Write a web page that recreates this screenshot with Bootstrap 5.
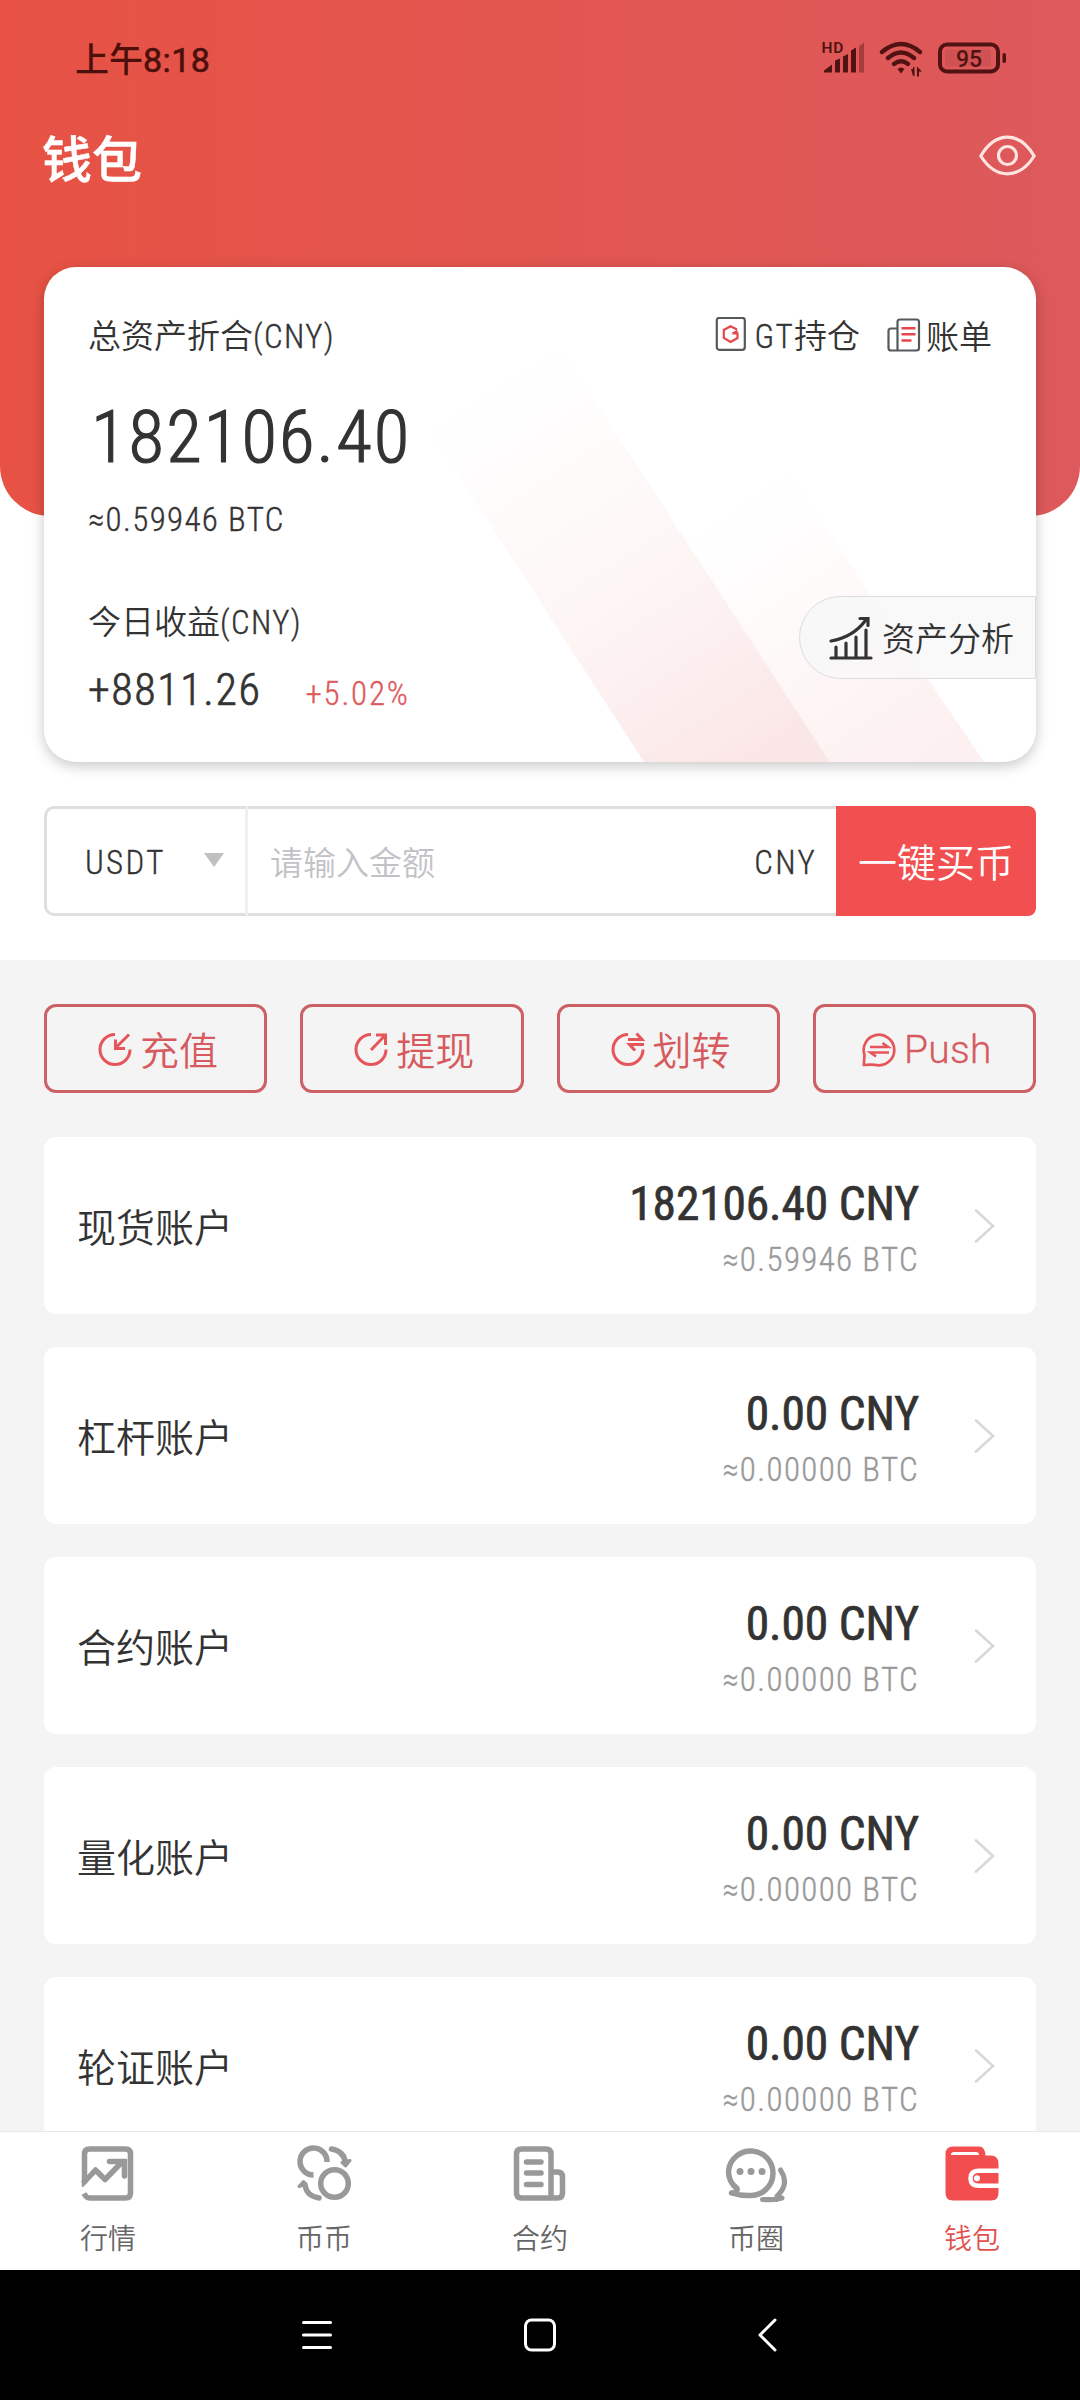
<!DOCTYPE html>
<html lang="zh-CN">
<head>
<meta charset="utf-8">
<meta name="viewport" content="width=device-width, initial-scale=1">
<title>钱包</title>
<link href="https://cdn.jsdelivr.net/npm/bootstrap@5.3.0/dist/css/bootstrap.min.css" rel="stylesheet">
<style>
  body { font-family: Roboto, "Noto Sans CJK SC", sans-serif; font-stretch: 87.5%; font-weight: 300; font-size: 33px; line-height: 1; color: #333; background: #fff; }
  svg { display: block; flex: none; }
  .screen { width: 1080px; height: 2400px; }
  .zh { font-family: "Noto Sans CJK SC", sans-serif; font-weight: 350; letter-spacing: 0; -webkit-text-stroke: 0; }
  .din { letter-spacing: 1.35px; -webkit-text-stroke: .35px currentColor; }
  .top-area { height: 960px; background: #fff; position: relative; }
  .hero { height: 516px; border-radius: 0 0 50px 50px; background: linear-gradient(90deg, #e75244, #e25650 50%, #dd595c); }
  .statusbar { height: 118px; padding: 0 74px 0 75px; color: #4b0f0c; }
  .clock { font-size: 34px; font-weight: 500; font-stretch: 100%; }
  .clock b { font-weight: 400; font-family: Roboto, sans-serif; letter-spacing: .4px; -webkit-text-stroke: .6px currentColor; }
  .titlebar { height: 76px; padding: 0 44px 0 42px; }
  .title-text { font-size: 50px; font-weight: 500; color: #fff; -webkit-text-stroke: .5px #fff; }
  .asset-card { position: absolute; left: 44px; right: 44px; top: 267px; height: 495px; border-radius: 32px; background: #fff; box-shadow: 0 4px 14px rgba(0,0,0,.22); overflow: hidden; padding: 48px 44px 0; }
  .rays { position: absolute; left: 0; top: 0; }
  .layer { position: relative; }
  .line-label { height: 40px; }
  .total { font-size: 73px; letter-spacing: 2.1px; -webkit-text-stroke: 1.2px currentColor; margin-top: 46px; height: 73px; padding-left: 3px; }
  .total-btc { margin-top: 29px; height: 33px; }
  .today { margin-top: 65px; height: 40px; }
  .profit { font-size: 44px; letter-spacing: 1.6px; -webkit-text-stroke: .7px currentColor; }
  .pct { color: #dd5a5c; letter-spacing: 1.8px; margin-left: 44px; }
  .profit-row { margin-top: 27px; height: 44px; }
  .analysis { position: absolute; right: 0; top: 329px; width: 237px; height: 83px; border: 1px solid #dcdcdc; border-radius: 42px 0 0 42px; background: rgba(248,248,248,.8); padding-left: 29px; gap: 9px; }
  .buy { position: absolute; left: 44px; right: 44px; top: 806px; height: 110px; }
  .coin { width: 204px; border: 3px solid #dfdfdf; border-right-color: #f0f0f0; border-radius: 10px 0 0 10px; padding: 2px 21px 0 38px; }
  .coin .din, .amount .din { letter-spacing: 2.3px; padding-top: 1px; }
  .arrow { margin-top: -5px; }
  .amount { border: solid #dfdfdf; border-width: 3px 0; padding: 1px 19px 0 22px; }
  .hint { color: #c2c2c6; }
  .buy-btn { width: 200px; background: #f25050; color: #fff; border-radius: 0 8px 8px 0; font-size: 39px; padding-bottom: 1px; }
  .list-area { background: #f4f4f4; padding: 44px 44px 0; min-height: 0; }
  .act { height: 89px; border: 3px solid #cd6065; border-radius: 12px; color: #d65a5e; font-size: 39px; gap: 8px; padding-left: 5px; }
  .acts { gap: 33px; margin-bottom: 44px; }
  .push { font-size: 39px; font-stretch: 100%; letter-spacing: .3px; -webkit-text-stroke: .3px currentColor; padding-top: 4px; }
  .acct { height: 177px; margin-bottom: 33px; border-radius: 12px; background: #fff; padding: 0 41px 0 33px; }
  .acct-name { font-size: 39px; }
  .figures { padding-top: 6px; }
  .cny { font-size: 47.5px; font-weight: 400; letter-spacing: -.15px; -webkit-text-stroke: .7px currentColor; }
  .acct-btc { color: #999; margin-top: 15px; }
  .chev { margin-left: 54px; }
  .tabs { height: 139px; border-top: 1px solid #e8e8e8; background: #fff; padding-top: 10px; }
  .tab-item { width: 216px; color: #666; font-size: 28px; gap: 19px; }
  .tab-item.on { color: #e2504f; }
  .sysbar { height: 130px; background: #000; padding-left: 302px; }
  .home-key { margin-left: 192px; margin-right: 201px; }
</style>
</head>
<body>
<div class="screen d-flex flex-column overflow-hidden">
  <div class="top-area flex-shrink-0">
    <div class="hero">
      <div class="statusbar d-flex align-items-center justify-content-between">
        <div class="clock zh">上午<b>8:18</b></div>
        <svg width="186" height="40" viewBox="820 42 186 40" fill="#511312">
          <text x="821.500" y="56" font-size="15.500" font-weight="600" font-family="Roboto, sans-serif" style="font-stretch:100%" letter-spacing=".8">HD</text>
          <path d="M824 75.500v-2l8-6v8zM835 75.500v-12l5-2v14zM843 75.500v-16l5-2.500v18.500zM851 75.500v-22l5-3v25z"/>
          <path opacity=".4" d="M859 75.500v-26l5-4v30z"/>
          <g fill="none" stroke="#511312" stroke-width="4.300" stroke-linecap="round"><path d="M882 55q19-16 38 0M888 61q13-11 26 0M894 67q7-5.500 14 0"/></g>
          <path d="M897.500 72q3.500-3 7 0l-3.500 4.500zM911 72h2v-2l1.500 0v9h-1.500zM917 79.500v-10l5 5h-3v5z"/>
          <rect x="940" y="47.500" width="58" height="27" rx="7" fill="none" stroke="#511312" stroke-width="4"/>
          <rect x="945" y="52.500" width="46" height="17" rx="3" opacity=".1"/>
          <rect x="1002.500" y="56" width="3.500" height="10" rx="1.700"/>
          <text x="956" y="69.500" font-size="23" font-weight="500" font-family="Roboto, sans-serif" style="font-stretch:100%">95</text>
        </svg>
      </div>
      <div class="titlebar d-flex align-items-center justify-content-between">
        <div class="title-text zh">钱包</div>
        <svg width="57" height="42" viewBox="0 0 57 42" fill="none" stroke="#ffe4e0" stroke-width="3.200"><path d="M1.800 21Q13 2.200 28.500 2.200T55.200 21Q44 38.800 28.500 38.800T1.800 21z" stroke-linejoin="round"/><circle cx="28.500" cy="20.500" r="9"/></svg>
      </div>
    </div>

    <div class="asset-card">
      <svg class="rays" width="992" height="495" viewBox="44 267 992 495">
        <defs>
          <linearGradient id="g1" gradientUnits="userSpaceOnUse" x1="500" y1="380" x2="750" y2="765"><stop offset="0" stop-color="#fbe4e5" stop-opacity="0"/><stop offset=".4" stop-color="#fceaea" stop-opacity=".3"/><stop offset="1" stop-color="#fbe6e7"/></linearGradient>
          <linearGradient id="g2" gradientUnits="userSpaceOnUse" x1="740" y1="500" x2="920" y2="765"><stop offset="0" stop-color="#fcecec" stop-opacity="0"/><stop offset=".45" stop-color="#fcecec" stop-opacity=".3"/><stop offset="1" stop-color="#fdf0f0"/></linearGradient>
        </defs>
        <path fill="url(#g1)" d="M374 345 530 302 830 762H644z"/>
        <path fill="url(#g2)" d="M650 495 760 430 984 762H830z"/>
      </svg>
      <div class="layer line-label d-flex align-items-center justify-content-between">
        <div class="din"><span class="zh">总资产折合</span>(CNY)</div>
        <div class="d-flex align-items-center">
          <svg width="32" height="36" viewBox="0 0 32 36" fill="none" stroke="#54595c" stroke-width="2.200"><rect x="1.800" y=".8" width="28" height="32" rx="2.500"/><path d="M22 12.500 15.500 9.300 8.800 13v8l6.700 4 7-4v-4.500h-5l5-2.500" stroke="#e5474a" stroke-width="2.200"/></svg>
          <span class="ms-2 din">GT<span class="zh">持仓</span></span>
          <svg class="ms-4" width="38" height="34" viewBox="-3 0 38 34" fill="none" stroke="#54595c" stroke-width="2.200"><path d="M10.500 32.500V4q0-2.500 2.500-2.500h16.500q2.500 0 2.500 2.500v26q0 2.500-2.500 2.500H4q-2.500 0-2.500-2.500V13q0-2.500 2.500-2.500h6.500"/><path d="M14.500 10.300h14M14.500 16.300h14M14.500 22.500h10" stroke="#e5474a" stroke-width="2.400"/></svg>
          <span class="zh ms-1">账单</span>
        </div>
      </div>
      <div class="layer total">182106.40</div>
      <div class="layer din total-btc">≈0.59946 BTC</div>
      <div class="layer today d-flex align-items-center"><div class="din"><span class="zh">今日收益</span>(CNY)</div></div>
      <div class="layer profit-row d-flex align-items-baseline"><span class="profit">+8811.26</span><span class="din pct">+5.02%</span></div>
      <div class="analysis d-flex align-items-center">
        <svg width="44" height="44" viewBox="0 0 44 44" fill="none" stroke="#333" stroke-width="3.200" stroke-linecap="round"><path d="M2 42h40M7 41V31M17 41V27M27 41V21M37 41V14M2 25Q24 21 36 5M31 2.500h8v7"/></svg>
        <span class="zh">资产分析</span>
      </div>
    </div>

    <div class="buy d-flex">
      <div class="coin d-flex align-items-center justify-content-between"><span class="din">USDT</span><svg class="arrow" width="20" height="14" viewBox="0 0 20 14"><path d="M0 0h20L10 14z" fill="#c0c0c0"/></svg></div>
      <div class="amount flex-grow-1 d-flex align-items-center justify-content-between"><span class="hint zh">请输入金额</span><span class="din">CNY</span></div>
      <div class="buy-btn zh d-flex align-items-center justify-content-center">一键买币</div>
    </div>
  </div>

  <div class="list-area flex-grow-1 overflow-hidden">
    <div class="acts d-flex">
      <div class="act col d-flex align-items-center justify-content-center"><svg width="34" height="36" viewBox="0 0 34 36" fill="none" stroke="#e5555a" stroke-width="3"><path d="M17 3.500A15 15 0 1 0 32 18.500M31 3.500 17.500 17M17.500 8.500V17.500H27"/></svg><span class="zh">充值</span></div>
      <div class="act col d-flex align-items-center justify-content-center"><svg width="34" height="36" viewBox="0 0 34 36" fill="none" stroke="#e5555a" stroke-width="3"><path d="M17 3.500A15 15 0 1 0 32 18.500M17 19 31 4.500M22 4H31.500V14"/></svg><span class="zh">提现</span></div>
      <div class="act col d-flex align-items-center justify-content-center"><svg width="34" height="36" viewBox="0 0 34 36" fill="none" stroke="#e5555a" stroke-width="3"><path d="M17 3.500A15 15 0 1 0 32 18.500M17 8.500H31L25.500 2.500M33 13.500H18.500L24 19.500"/></svg><span class="zh">划转</span></div>
      <div class="act col d-flex align-items-center justify-content-center"><svg width="34" height="36" viewBox="0 0 34 36" fill="none" stroke="#e5555a" stroke-width="2.700"><path d="M1.800 34 2.500 24A15.300 15.300 0 1 1 17 34.300Q10 33 1.800 34z" stroke-linejoin="round"/><path d="M8 16H26L20.500 12M27 21.500H8.500L14 25.500"/></svg><span class="push">Push</span></div>
    </div>

    <div class="acct d-flex align-items-center"><div class="acct-name zh me-auto">现货账户</div><div class="figures text-end"><div class="cny">182106.40 CNY</div><div class="din acct-btc">≈0.59946 BTC</div></div><svg class="chev" width="22" height="36" viewBox="0 0 22 36" fill="none" stroke="#d8d8d8" stroke-width="2.600" stroke-linecap="round"><path d="M3 2.500 20 18 3 33.500"/></svg></div>
    <div class="acct d-flex align-items-center"><div class="acct-name zh me-auto">杠杆账户</div><div class="figures text-end"><div class="cny">0.00 CNY</div><div class="din acct-btc">≈0.00000 BTC</div></div><svg class="chev" width="22" height="36" viewBox="0 0 22 36" fill="none" stroke="#d8d8d8" stroke-width="2.600" stroke-linecap="round"><path d="M3 2.500 20 18 3 33.500"/></svg></div>
    <div class="acct d-flex align-items-center"><div class="acct-name zh me-auto">合约账户</div><div class="figures text-end"><div class="cny">0.00 CNY</div><div class="din acct-btc">≈0.00000 BTC</div></div><svg class="chev" width="22" height="36" viewBox="0 0 22 36" fill="none" stroke="#d8d8d8" stroke-width="2.600" stroke-linecap="round"><path d="M3 2.500 20 18 3 33.500"/></svg></div>
    <div class="acct d-flex align-items-center"><div class="acct-name zh me-auto">量化账户</div><div class="figures text-end"><div class="cny">0.00 CNY</div><div class="din acct-btc">≈0.00000 BTC</div></div><svg class="chev" width="22" height="36" viewBox="0 0 22 36" fill="none" stroke="#d8d8d8" stroke-width="2.600" stroke-linecap="round"><path d="M3 2.500 20 18 3 33.500"/></svg></div>
    <div class="acct d-flex align-items-center"><div class="acct-name zh me-auto">轮证账户</div><div class="figures text-end"><div class="cny">0.00 CNY</div><div class="din acct-btc">≈0.00000 BTC</div></div><svg class="chev" width="22" height="36" viewBox="0 0 22 36" fill="none" stroke="#d8d8d8" stroke-width="2.600" stroke-linecap="round"><path d="M3 2.500 20 18 3 33.500"/></svg></div>
  </div>

  <div class="tabs d-flex flex-shrink-0">
    <div class="tab-item d-flex flex-column align-items-center">
      <svg width="62" height="62" viewBox="0 0 62 62" fill="none" stroke="#999" stroke-width="5.500"><path d="M7.500 45V12q0-5 5-5h36q5 0 5 5v39q0 5-5 5h-36q-3 0-5.500-4.500"/><path d="M6 41.500 18.500 28 28 37.500 46 19" stroke-linejoin="round"/><path d="M32.500 19.500H47.500V34" stroke-linecap="round"/><path d="M3 50 14 40" stroke="#fff" stroke-width="3.500"/></svg>
      <span class="zh">行情</span>
    </div>
    <div class="tab-item d-flex flex-column align-items-center">
      <svg width="62" height="62" viewBox="0 0 62 62" fill="none" stroke="#999" stroke-width="5.500"><circle cx="41.500" cy="41.500" r="13.800"/><path d="M34 20A13.500 13.500 0 1 0 20.500 33"/><path d="M38.500 7Q51 9 52.500 21M26 56Q13.500 54 12 43" stroke-linecap="round"/><path d="M49 20.500 52.500 24 57 18.500zM6 44.500 10.500 39.500 13 42z" stroke-width="3" fill="#999" stroke-linejoin="round"/></svg>
      <span class="zh">币币</span>
    </div>
    <div class="tab-item d-flex flex-column align-items-center">
      <svg width="62" height="62" viewBox="0 0 62 62" fill="none" stroke="#999" stroke-width="5.500"><path d="M42 56V12q0-5-5-5H12.500q-5 0-5 5v39q0 5 5 5h36q5 0 5-5V35q0-5-5-5H43"/><path d="M17.500 20H32M17.500 31H32M17.500 42.500H32" stroke-linecap="round"/></svg>
      <span class="zh">合约</span>
    </div>
    <div class="tab-item d-flex flex-column align-items-center">
      <svg width="62" height="62" viewBox="0 0 62 62" fill="none" stroke="#999" stroke-width="5.500"><path d="M12 46.500Q3.500 40 3.500 29A22.300 22.300 0 1 1 26 53.500Q16 54 6.500 51 13 50.500 12 46.500z" stroke-linejoin="round"/><g fill="#999" stroke="none"><circle cx="15" cy="29.500" r="3.500"/><circle cx="26" cy="29.500" r="3.500"/><circle cx="37" cy="29.500" r="3.500"/></g><path d="M55.500 28Q65 42 52 54L57 56Q48 58.500 37.500 57.500H52" stroke-linecap="round" stroke-linejoin="round" stroke-width="5"/></svg>
      <span class="zh">币圈</span>
    </div>
    <div class="tab-item on d-flex flex-column align-items-center">
      <svg width="62" height="62" viewBox="0 0 62 62"><path d="M12 4.500h26q6 0 6.500 9h5q8 0 8 8V51q0 7.500-7.500 7.500H12q-7.500 0-7.500-7.500V12q0-7.500 7.500-7.500z" fill="#f24e4f"/><path d="M10 13q0-3 3-3h22q3 0 3 3z" fill="#fff"/><path d="M58 28.800H38q-8.500 0-8.500 7.500t8.500 7.500h20" fill="none" stroke="#fff" stroke-width="4.500"/><circle cx="36" cy="36.300" r="3" fill="#fff"/></svg>
      <span class="zh">钱包</span>
    </div>
  </div>

  <div class="sysbar d-flex flex-shrink-0 align-items-center">
    <svg width="30" height="32" viewBox="0 0 30 32" stroke="#fff" stroke-width="3" stroke-linecap="round"><path d="M1.500 3.500h27M1.500 16h27M1.500 28.500h27"/></svg>
    <svg class="home-key" width="32" height="34" viewBox="0 0 32 34" fill="none" stroke="#fff" stroke-width="3"><rect x="1.500" y="2" width="29" height="30" rx="6"/></svg>
    <svg width="24" height="34" viewBox="0 0 24 34" fill="none" stroke="#fff" stroke-width="3" stroke-linecap="round" stroke-linejoin="round"><path d="M18 2 3 17 18 32"/></svg>
  </div>
</div>
<script src="https://cdn.jsdelivr.net/npm/bootstrap@5.3.0/dist/js/bootstrap.bundle.min.js"></script>
</body>
</html>
